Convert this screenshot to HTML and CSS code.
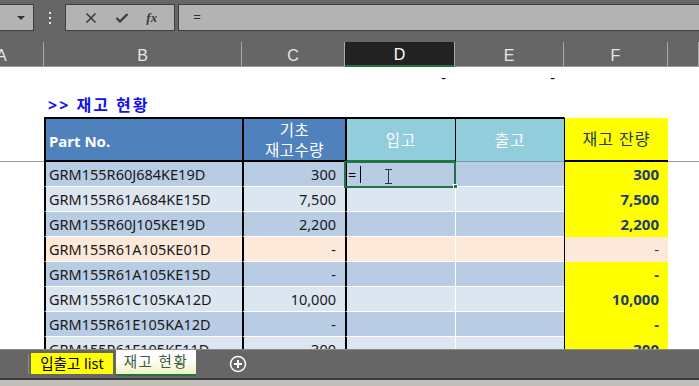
FILE: index.html
```html
<!DOCTYPE html>
<html lang="ko">

<head>
    <meta charset="UTF-8">
    <meta name="viewport" content="width=device-width, initial-scale=1.0">
    <title>재고 현황</title>
    <link rel="stylesheet" href="styles.css">
</head>

<body>
    <div class="app">
        <div class="formula-bar">
            <div class="name-box"><span class="caret"></span></div>
            <div class="dots"><i></i><i></i><i></i></div>
            <div class="fx-buttons">
                <svg class="icon" width="12" height="12" viewBox="0 0 12 12">
                    <path d="M1.5 1.5 L10.5 10.5 M10.5 1.5 L1.5 10.5" stroke="#3a3a3a" stroke-width="1.6" fill="none" />
                </svg>
                <svg class="icon" width="14" height="12" viewBox="0 0 14 12">
                    <path d="M1.5 6 L5 9.5 L12.5 2" stroke="#3a3a3a" stroke-width="2.2" fill="none" />
                </svg>
                <span class="fx">fx</span>
            </div>
            <div class="formula-input">=</div>
        </div>

        <div class="sheet">
            <div class="col-head">A</div>
            <div class="col-head">B</div>
            <div class="col-head">C</div>
            <div class="col-head active">D</div>
            <div class="col-head">E</div>
            <div class="col-head">F</div>
            <div class="col-head"></div>

            <div class="cell"></div>
            <div class="cell"></div>
            <div class="cell"></div>
            <div class="cell num dash">-</div>
            <div class="cell num dash">-</div>
            <div class="cell"></div>
            <div class="cell"></div>

            <div class="cell"></div>
            <div class="cell title">&gt;&gt; 재고 현황</div>
            <div class="cell"></div>
            <div class="cell"></div>
            <div class="cell"></div>
            <div class="cell"></div>
            <div class="cell"></div>

            <div class="cell freeze"></div>
            <div class="cell th th-part">Part No.</div>
            <div class="cell th th-base">기초<br>재고수량</div>
            <div class="cell th th-io">입고</div>
            <div class="cell th th-io th-out">출고</div>
            <div class="cell th th-stock freeze">재고 잔량</div>
            <div class="cell freeze"></div>

            <div class="cell"></div>
            <div class="cell part dark">GRM155R60J684KE19D</div>
            <div class="cell base dark num">300</div>
            <div class="cell io dark selected">=<span class="text-caret"></span><span class="ibeam"></span><span class="handle"></span></div>
            <div class="cell io dark out"></div>
            <div class="cell stock num">300</div>
            <div class="cell"></div>

            <div class="cell"></div>
            <div class="cell part light">GRM155R61A684KE15D</div>
            <div class="cell base light num">7,500</div>
            <div class="cell io light"></div>
            <div class="cell io light out"></div>
            <div class="cell stock num">7,500</div>
            <div class="cell"></div>

            <div class="cell"></div>
            <div class="cell part dark">GRM155R60J105KE19D</div>
            <div class="cell base dark num">2,200</div>
            <div class="cell io dark"></div>
            <div class="cell io dark out"></div>
            <div class="cell stock num">2,200</div>
            <div class="cell"></div>

            <div class="cell"></div>
            <div class="cell part peach">GRM155R61A105KE01D</div>
            <div class="cell base peach num">-</div>
            <div class="cell io peach"></div>
            <div class="cell io peach out"></div>
            <div class="cell stock peach num">-</div>
            <div class="cell"></div>

            <div class="cell"></div>
            <div class="cell part dark">GRM155R61A105KE15D</div>
            <div class="cell base dark num">-</div>
            <div class="cell io dark"></div>
            <div class="cell io dark out"></div>
            <div class="cell stock num">-</div>
            <div class="cell"></div>

            <div class="cell"></div>
            <div class="cell part light">GRM155R61C105KA12D</div>
            <div class="cell base light num">10,000</div>
            <div class="cell io light"></div>
            <div class="cell io light out"></div>
            <div class="cell stock num">10,000</div>
            <div class="cell"></div>

            <div class="cell"></div>
            <div class="cell part dark">GRM155R61E105KA12D</div>
            <div class="cell base dark num">-</div>
            <div class="cell io dark"></div>
            <div class="cell io dark out"></div>
            <div class="cell stock num">-</div>
            <div class="cell"></div>

            <div class="cell"></div>
            <div class="cell part light">GRM155R61E105KE11D</div>
            <div class="cell base light num">300</div>
            <div class="cell io light"></div>
            <div class="cell io light out"></div>
            <div class="cell stock num">300</div>
            <div class="cell"></div>
        </div>

        <div class="tab-bar">
            <div class="tab-sep"></div>
            <div class="tab tab-list">입출고 list</div>
            <div class="tab tab-active">재고 현황</div>
            <svg class="add-sheet" width="18" height="18" viewBox="0 0 18 18">
                <circle cx="9" cy="9" r="7.5" stroke="#fff" stroke-width="1.5" fill="none" />
                <path d="M9 5 V13 M5 9 H13" stroke="#fff" stroke-width="2" />
            </svg>
        </div>
        <div class="status-strip"></div>
    </div>
</body>

</html>
```

FILE: styles.css
```css
body {
    margin: 0;
    font-family: "Noto Sans", "Noto Sans CJK KR", sans-serif;
    background-color: #666666;
}

.app {
    width: 699px;
    height: 386px;
    overflow: hidden;
    display: flex;
    flex-direction: column;
}

/* formula bar */

.formula-bar {
    height: 42px;
    flex-shrink: 0;
    display: flex;
    align-items: flex-start;
    padding-top: 4px;
    box-sizing: border-box;
    background-color: #666666;
}

.name-box {
    width: 34px;
    height: 27px;
    box-sizing: border-box;
    background-color: #b3b3b3;
    border: 1px solid #3f3f3f;
    border-left: none;
    position: relative;
}

.caret {
    position: absolute;
    right: 8px;
    top: 11px;
    border-left: 4px solid transparent;
    border-right: 4px solid transparent;
    border-top: 4px solid #333;
}

.dots {
    width: 31px;
    height: 27px;
    display: flex;
    flex-direction: column;
    align-items: center;
    justify-content: center;
    gap: 3px;
}

.dots i {
    width: 2px;
    height: 2px;
    background-color: #e8e8e8;
}

.fx-buttons {
    width: 110px;
    height: 27px;
    box-sizing: border-box;
    background-color: #b3b3b3;
    border: 1px solid #3f3f3f;
    display: flex;
    align-items: center;
    justify-content: space-around;
    padding: 0 8px 0 10px;
}

.fx {
    font-family: "Liberation Serif", serif;
    font-style: italic;
    font-weight: bold;
    font-size: 13px;
    color: #3a3a3a;
}

.formula-input {
    flex: 1;
    margin-left: 3px;
    height: 27px;
    box-sizing: border-box;
    background-color: #b3b3b3;
    border: 1px solid #3f3f3f;
    border-right: none;
    padding-left: 14px;
    font-size: 14px;
    line-height: 24px;
    color: #333;
}

/* sheet */

.sheet {
    flex: 1;
    overflow: hidden;
    background-color: #fff;
    display: grid;
    grid-template-columns: 44px 198px 103px 110px 109px 104px 1fr;
    grid-template-rows: 25px 25px 25px 45px repeat(8, 25px);
    font-size: 14.5px;
    color: #1a1a1a;
}

.col-head {
    background-color: #666666;
    color: #e6e6e6;
    font-family: "Liberation Sans", sans-serif;
    font-size: 16px;
    text-align: center;
    line-height: 27px;
    border-right: 1px solid #a8a8a8;
    border-bottom: 1px solid #9a9a9a;
}

.col-head:first-child {
    text-align: left;
    text-indent: -4px;
}

.col-head.active {
    background-color: #222;
    color: #fff;
    border-bottom: 2px solid #217346;
    line-height: 26px;
}

.cell {
    box-sizing: border-box;
    white-space: nowrap;
    overflow: hidden;
    line-height: 24px;
}

.num {
    text-align: right;
    padding-right: 9px;
}

.dash {
    color: #000;
    line-height: 20px;
}

.title {
    padding-left: 4px;
    color: #1010ee;
    font-weight: bold;
    font-size: 16px;
    letter-spacing: 2px;
    line-height: 26px;
}

.freeze {
    border-bottom: 1px solid #9a9a9a;
}

.th {
    color: #fff;
    font-size: 15.5px;
    display: flex;
    align-items: center;
    border-top: 2px solid #000;
    border-bottom: 2px solid #000;
}

.th-part {
    background-color: #4f81bd;
    border-left: 2px solid #000;
    padding-left: 3px;
    padding-top: 2px;
    font-weight: bold;
    font-size: 15px;
}

.th-base {
    background-color: #4f81bd;
    border-left: 2px solid #000;
    justify-content: center;
    text-align: center;
    line-height: 20px;
    letter-spacing: 0.5px;
}

.th-io {
    background-color: #92cddc;
    border-left: 2px solid #000;
    justify-content: center;
    letter-spacing: 1px;
    border-bottom-color: #217346;
}

.th-out {
    border-left: 1px solid #000;
    border-bottom: 1px solid #6f9fae;
}

.th-stock {
    background-color: #ffff00;
    color: #203864;
    border-top: 1px solid #fff;
    border-left: 1px solid #000;
    justify-content: center;
    font-size: 16px;
    letter-spacing: 1px;
}

.part {
    border-left: 2px solid #000;
    padding-left: 3px;
    border-bottom: 1px solid #fff;
}

.base,
.io {
    border-left: 2px solid #000;
    border-bottom: 1px solid #fff;
}

.io.out {
    border-left: 1px solid #fff;
}

.dark {
    background-color: #b8cce4;
}

.light {
    background-color: #dce6f1;
}

.peach {
    background-color: #fde9d9;
}

.stock {
    background-color: #ffff00;
    border-left: 1px solid #000;
    color: #1f3b73;
    font-weight: bold;
    font-size: 15px;
}

.stock.peach {
    background-color: #fde9d9;
    font-weight: normal;
}

.selected {
    position: relative;
    overflow: visible;
    padding-left: 1px;
    color: #000;
    outline: 2px solid #217346;
    outline-offset: -1px;
    border-bottom-color: transparent;
}

.text-caret {
    position: absolute;
    left: 13px;
    top: 4px;
    width: 1px;
    height: 17px;
    background-color: #000;
}

.ibeam {
    position: absolute;
    left: 41px;
    top: 7px;
    width: 1px;
    height: 15px;
    background-color: #333;
}

.ibeam::before,
.ibeam::after {
    content: "";
    position: absolute;
    left: -3px;
    width: 7px;
    height: 1px;
    background-color: #333;
}

.ibeam::before {
    top: 0;
}

.ibeam::after {
    bottom: 0;
}

.handle {
    position: absolute;
    right: -3px;
    bottom: -3px;
    width: 5px;
    height: 5px;
    background-color: #217346;
    border: 1px solid #fff;
    box-sizing: border-box;
}

/* tabs */

.tab-bar {
    height: 29px;
    flex-shrink: 0;
    background-color: #666666;
    border-top: 1px solid #8a8a8a;
    display: flex;
    align-items: flex-start;
    box-sizing: border-box;
}

.tab-sep {
    width: 1px;
    height: 20px;
    margin: 4px 2px 0 28px;
    background-color: #8c8c8c;
}

.tab {
    height: 21px;
    font-size: 14.5px;
    line-height: 21px;
    text-align: center;
    box-sizing: border-box;
}

.tab-list {
    width: 82px;
    margin-top: 3px;
    background-color: #ffff00;
    color: #000;
}

.tab-active {
    width: 80px;
    height: 26px;
    margin-left: 3px;
    line-height: 23px;
    letter-spacing: 1.5px;
    background: linear-gradient(#ffffff 40%, #f0f0c0 100%);
    border-bottom: 2px solid #217346;
    color: #3d5c3d;
}

.add-sheet {
    margin: 5px 0 0 33px;
}

.status-strip {
    height: 8px;
    flex-shrink: 0;
    background-color: #c0bcb8;
    border-top: 2px solid #3c3c3c;
    box-sizing: border-box;
}
```
